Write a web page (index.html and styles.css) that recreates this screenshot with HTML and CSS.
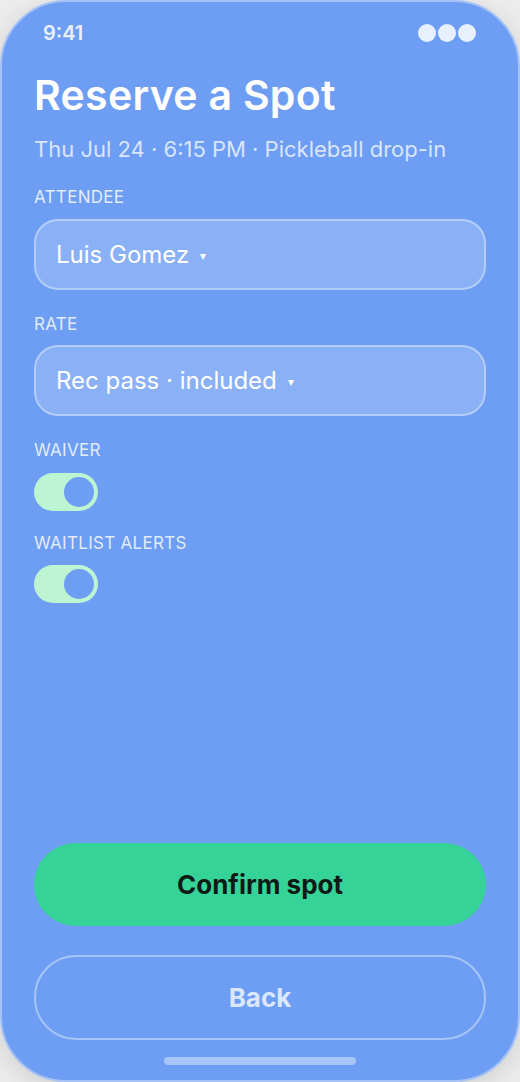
FILE: index.html
```html
<!DOCTYPE html>
<html lang="en">
<head>
<meta charset="utf-8">
<title>Reserve a Spot</title>
<link rel="stylesheet" href="styles.css">
</head>
<body>
<div class="phone">
  <div class="status">
    <span class="time">9:41</span>
    <span class="dots"><i></i><i></i><i></i></span>
  </div>
  <h1 class="title">Reserve a Spot</h1>
  <p class="subtitle">Thu Jul 24 · 6:15 PM · Pickleball drop-in</p>

  <div class="label label-first">ATTENDEE</div>
  <div class="field field-first">Luis Gomez <span class="caret">▾</span></div>

  <div class="label">RATE</div>
  <div class="field">Rec pass · included <span class="caret">▾</span></div>

  <div class="label">WAIVER</div>
  <div class="toggle"><span class="knob"></span></div>

  <div class="label label-tight">WAITLIST ALERTS</div>
  <div class="toggle toggle-tight"><span class="knob"></span></div>

  <div class="spacer"></div>

  <button class="btn btn-primary">Confirm spot</button>
  <button class="btn btn-ghost">Back</button>
  <div class="home"></div>
</div>
</body>
</html>
```

FILE: styles.css
```css
html, body {
  margin: 0;
  padding: 0;
}
body {
  background: #ececec;
  font-family: Inter, "Noto Sans", "Liberation Sans", sans-serif;
}
.phone {
  width: 520px;
  height: 1082px;
  box-sizing: border-box;
  border: 2px solid #a5c2f6;
  border-radius: 66px;
  background: #6d9ef3;
  display: flex;
  flex-direction: column;
  padding: 0 32px;
  overflow: hidden;
  box-shadow: 0 6px 24px rgba(0, 0, 0, 0.12);
}
.status {
  height: 62px;
  flex: none;
  display: flex;
  align-items: center;
  justify-content: space-between;
  padding: 0 10px 0 9px;
}
.time {
  color: #e9f0fd;
  font-size: 20px;
  font-weight: 600;
}
.dots {
  display: flex;
  gap: 2px;
}
.dots i {
  width: 18px;
  height: 18px;
  border-radius: 50%;
  background: #e8f0fd;
}
.title {
  margin: 7px 0 0;
  font-size: 41px;
  line-height: 48px;
  font-weight: 600;
  color: #ffffff;
  letter-spacing: 0.3px;
}
.subtitle {
  margin: 16px 0 0;
  font-size: 22px;
  line-height: 28px;
  color: rgba(255, 255, 255, 0.75);
}
.label {
  margin-top: 23px;
  font-size: 17px;
  line-height: 22px;
  color: rgba(255, 255, 255, 0.82);
  letter-spacing: 0.3px;
}
.label-first {
  margin-top: 23px;
}
.label-tight {
  margin-top: 21px;
}
.field {
  margin-top: 10px;
  height: 71px;
  box-sizing: border-box;
  border: 2px solid rgba(255, 255, 255, 0.35);
  border-radius: 24px;
  background: rgba(255, 255, 255, 0.2);
  display: flex;
  align-items: center;
  padding: 0 20px;
  font-size: 24px;
  color: #ffffff;
  white-space: pre;
}
.field-first {
  margin-top: 11px;
}
.caret {
  font-size: 12px;
  margin-left: 4px;
  position: relative;
  top: 1px;
}
.toggle {
  margin-top: 12px;
  width: 64px;
  height: 38px;
  border-radius: 19px;
  background: #bdf5d3;
  display: flex;
  align-items: center;
  justify-content: flex-end;
  padding-right: 4px;
  box-sizing: border-box;
}
.toggle-tight {
  margin-top: 11px;
}
.knob {
  width: 30px;
  height: 30px;
  border-radius: 50%;
  background: #6d9ef3;
}
.spacer {
  flex: 1;
}
.btn {
  display: block;
  width: 100%;
  height: 83px;
  border-radius: 42px;
  font-family: Inter, "Noto Sans", "Liberation Sans", sans-serif;
  font-size: 26px;
  font-weight: 700;
  cursor: pointer;
}
.btn-primary {
  background: #36d399;
  border: none;
  color: #0f1a14;
}
.btn-ghost {
  margin-top: 29px;
  height: 85px;
  background: transparent;
  border: 2px solid rgba(255, 255, 255, 0.4);
  color: #dbe7fd;
}
.home {
  width: 192px;
  height: 8px;
  border-radius: 4px;
  background: rgba(255, 255, 255, 0.4);
  align-self: center;
  margin: 17px 0 15px;
  flex: none;
}
```
